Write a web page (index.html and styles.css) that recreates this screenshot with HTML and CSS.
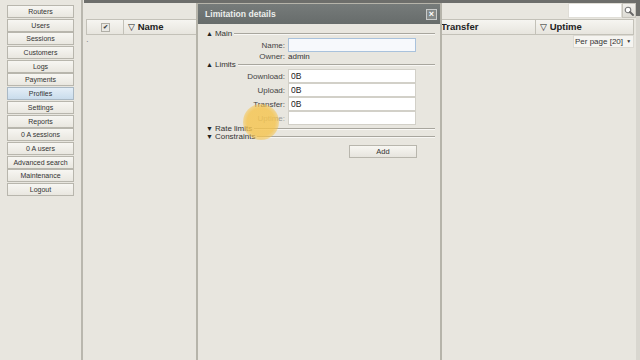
FILE: index.html
```html
<!DOCTYPE html>
<html lang="en">
<head>
  <meta charset="UTF-8">
  <title>Profiles</title>
  <link rel="stylesheet" href="styles.css">
</head>
<body>
  <div class="app">
    <nav class="sidebar">
      <button class="nav-btn">Routers</button>
      <button class="nav-btn">Users</button>
      <button class="nav-btn">Sessions</button>
      <button class="nav-btn">Customers</button>
      <button class="nav-btn">Logs</button>
      <button class="nav-btn">Payments</button>
      <button class="nav-btn active">Profiles</button>
      <button class="nav-btn">Settings</button>
      <button class="nav-btn">Reports</button>
      <button class="nav-btn">0 A sessions</button>
      <button class="nav-btn">0 A users</button>
      <button class="nav-btn">Advanced search</button>
      <button class="nav-btn">Maintenance</button>
      <button class="nav-btn">Logout</button>
    </nav>

    <main class="main">
      <div class="content">
        <div class="topbar"></div>
        <div class="toolbar">
          <input class="search" type="text">
          <button class="search-btn">
            <svg width="10" height="10" viewBox="0 0 10 10">
              <circle cx="4" cy="4" r="2.8" fill="#fff" stroke="#777" stroke-width="1.1"/>
              <path d="M6 6 L9 9" stroke="#666" stroke-width="1.8" stroke-linecap="round"/>
            </svg>
          </button>
        </div>
        <div class="thead">
          <div class="th th-check"><span class="check">&#10004;</span></div>
          <div class="th th-name"><span class="sort">&#9661;</span> Name</div>
          <div class="th th-down"><span class="sort">&#9661;</span> Download</div>
          <div class="th th-transfer">Transfer</div>
          <div class="th th-uptime"><span class="sort">&#9661;</span> Uptime</div>
        </div>
        <div class="under">
          <span class="dot">&middot;</span>
          <div class="perpage">Per page [20] <span class="caret">&#9660;</span></div>
        </div>
      </div>
      <div class="scrollbar"><div class="thumb"></div></div>
    </main>
  </div>

  <div class="dialog">
    <div class="dialog-title">
      <span>Limitation details</span>
      <span class="close">&#215;</span>
    </div>
    <div class="dialog-body">
      <div class="sec"><span class="arrow">&#9650;</span>Main</div>
      <div class="row"><label>Name:</label><input class="field focus" type="text"></div>
      <div class="row row-text"><label>Owner:</label><span>admin</span></div>

      <div class="sec"><span class="arrow">&#9650;</span>Limits</div>
      <div class="row"><label>Download:</label><input class="field" type="text" value="0B"></div>
      <div class="row"><label>Upload:</label><input class="field" type="text" value="0B"></div>
      <div class="row"><label>Transfer:</label><input class="field" type="text" value="0B"></div>
      <div class="row"><label class="dim">Uptime:</label><input class="field" type="text"></div>

      <div class="sec"><span class="arrow">&#9660;</span>Rate limits</div>
      <div class="sec"><span class="arrow">&#9660;</span>Constraints</div>

      <div class="actions"><button class="add-btn">Add</button></div>
    </div>
  </div>

  <div class="cursor"></div>
</body>
</html>
```

FILE: styles.css
```css
body {
  margin: 0;
  width: 640px;
  height: 360px;
  overflow: hidden;
  background-color: #e8e6df;
  font-family: "Liberation Sans", Arial, sans-serif;
  color: #333;
  position: relative;
}

.app {
  display: flex;
  height: 360px;
}

/* left menu */
.sidebar {
  width: 83px;
  border-right: 2px solid #b9b7ae;
  display: flex;
  flex-direction: column;
  gap: 0.7px;
  padding-top: 5px;
  box-sizing: border-box;
}

.nav-btn {
  margin-left: 7px;
  width: 67px;
  height: 13px;
  padding: 0;
  box-sizing: border-box;
  border: 1px solid #b8b6ad;
  background: linear-gradient(#f7f6f2, #e9e7e0);
  font-family: "Liberation Sans", Arial, sans-serif;
  font-size: 7px;
  line-height: 11px;
  color: #333;
}

.nav-btn.active {
  background: linear-gradient(#e4eef7, #c9dcec);
  border-color: #a9b8c4;
}

/* grid area */
.main {
  flex: 1;
  display: flex;
}

.content {
  flex: 1;
  padding-left: 3px;
}

.topbar {
  height: 3px;
  margin-left: -2px;
  background-color: #6d6e6b;
}

.toolbar {
  height: 15px;
  display: flex;
  justify-content: flex-end;
  align-items: flex-start;
}

.search {
  width: 54px;
  height: 15px;
  box-sizing: border-box;
  border: 1px solid #e0ded7;
  background-color: #fff;
  margin: 0;
  padding: 0;
}

.search-btn {
  width: 14px;
  height: 15px;
  padding: 0;
  border: 1px solid #c7c5bd;
  background: linear-gradient(#f2f1ed, #dedcd5);
  display: flex;
  align-items: center;
  justify-content: center;
}

.thead {
  display: flex;
  height: 16px;
  margin-top: 1px;
  margin-right: 2px;
  border: 1px solid #c3c1b8;
  box-sizing: border-box;
  background: linear-gradient(#f6f5f1, #e7e5de);
}

.th {
  font-size: 9.5px;
  font-weight: bold;
  line-height: 14px;
  padding-left: 4px;
  border-right: 1px solid #c3c1b8;
  box-sizing: border-box;
  color: #222;
  white-space: nowrap;
}

.sort {
  font-weight: normal;
  font-size: 9px;
}

.th-check {
  width: 37px;
  display: flex;
  align-items: center;
  justify-content: center;
  padding: 0;
}

.check {
  width: 7px;
  height: 7px;
  border: 1px solid #b0aea6;
  background-color: #e9e8e3;
  font-size: 6px;
  line-height: 7px;
  text-align: center;
  color: #444;
}

.th-name { width: 158px; }
.th-down { width: 147px; }
.th-transfer { width: 107px; padding-left: 12px; }
.th-uptime { flex: 1; border-right: none; }

.under {
  display: flex;
  justify-content: space-between;
  align-items: flex-start;
  margin-right: 2px;
}

.dot {
  font-size: 8px;
  line-height: 14px;
  margin-left: 0;
  color: #666;
}

.perpage {
  width: 61px;
  height: 13px;
  box-sizing: border-box;
  background-color: #f5f4f0;
  border: 1px solid #dcdad3;
  font-size: 8px;
  line-height: 11px;
  padding-left: 1px;
  white-space: nowrap;
  color: #333;
}

.caret {
  font-size: 5px;
  margin-left: 1px;
  vertical-align: 1px;
}

.scrollbar {
  width: 4px;
  background-color: #d9d7d0;
}

.thumb {
  height: 16px;
  background-color: #6c6d6a;
}

/* dialog */
.dialog {
  position: absolute;
  left: 196px;
  top: 3px;
  width: 246px;
  height: 360px;
  box-sizing: border-box;
  border: 2px solid #b6b4aa;
  border-top-width: 1px;
  background-color: #e8e6df;
}

.dialog-title {
  height: 20px;
  background: linear-gradient(#767b7a, #676c6b);
  display: flex;
  align-items: center;
  justify-content: space-between;
  padding: 0 3px 0 7px;
  font-size: 8.6px;
  font-weight: bold;
  color: #eceeed;
}

.close {
  width: 9px;
  height: 9px;
  border: 1px solid #c9cbca;
  background-color: #858a89;
  font-size: 9px;
  line-height: 9px;
  text-align: center;
  color: #fff;
}

.dialog-body {
  padding: 6px 5px 0 8px;
  font-size: 8px;
}

.sec {
  display: flex;
  align-items: center;
  height: 8px;
  line-height: 8px;
  color: #333;
}

.sec::after {
  content: "";
  flex: 1;
  margin-left: 2px;
  border-top: 1px solid #a8a69e;
  border-bottom: 1px solid #f8f7f4;
}

.arrow {
  font-size: 7px;
  margin-right: 2px;
  color: #222;
}

.row {
  display: flex;
  align-items: center;
  height: 14px;
}

.row-text {
  height: 9px;
}

.row label {
  width: 79px;
  text-align: right;
  margin-right: 3px;
  color: #444;
}

.row label.dim {
  color: #999;
}

.field {
  width: 128px;
  height: 14px;
  box-sizing: border-box;
  margin: 0;
  padding: 0 2px;
  border: 1px solid #d2d0c8;
  background-color: #fff;
  font-family: "Liberation Sans", Arial, sans-serif;
  font-size: 8.5px;
  color: #222;
}

.field.focus {
  border-color: #a9c2dc;
  background-color: #f7f9fc;
}

.actions {
  display: flex;
  justify-content: flex-end;
  margin-top: 4px;
  margin-right: 18px;
}

.add-btn {
  width: 68px;
  height: 13px;
  padding: 0;
  border: 1px solid #b8b6ad;
  background: linear-gradient(#f7f6f2, #e7e5de);
  font-family: "Liberation Sans", Arial, sans-serif;
  font-size: 7.5px;
  color: #333;
}

/* cursor highlight from the recording */
.cursor {
  position: absolute;
  left: 243px;
  top: 104px;
  width: 36px;
  height: 36px;
  border-radius: 50%;
  background: radial-gradient(circle, rgba(246, 196, 76, 0.8) 55%, rgba(246, 196, 76, 0.4) 75%, rgba(246, 196, 76, 0) 100%);
}
```
